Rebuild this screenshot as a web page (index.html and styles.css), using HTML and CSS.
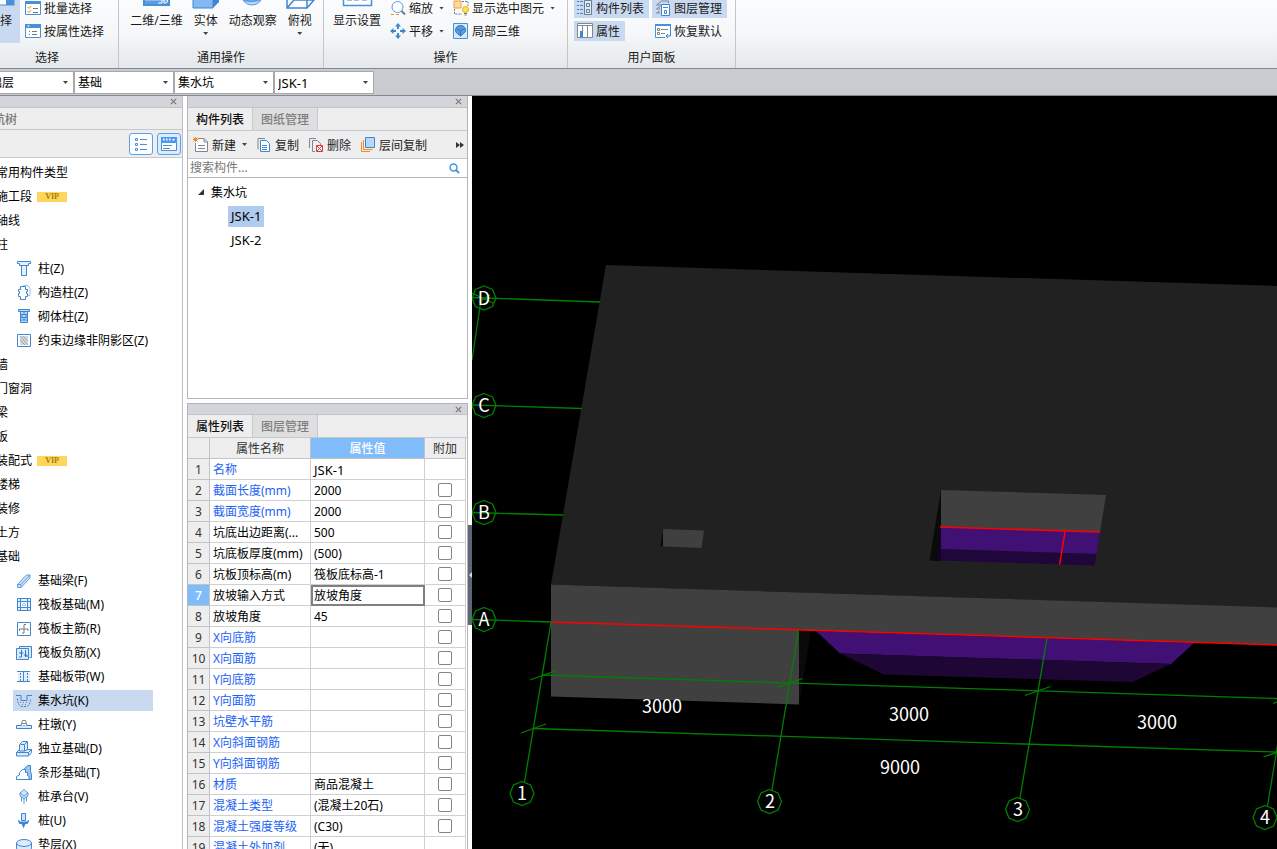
FILE: index.html
```html
<!DOCTYPE html>
<html lang="zh-CN">
<head>
<meta charset="utf-8">
<title>集水坑 JSK-1</title>
<link rel="stylesheet" href="styles.css">
</head>
<body>
<div class="app">
  <header class="ribbon">
    <section class="group">
      <div class="group-body">
        <button class="big on"><svg class="ico32" viewBox="0 0 32 32"><rect x="2" y="4" width="28" height="22" fill="#fff" stroke="#4a90d9"/><path d="M22 14l8 7v5h-8z" fill="#4a90d9"/></svg><span>选择</span></button>
        <div class="stack">
          <button class="small"><svg class="ico" viewBox="0 0 16 16"><path d="M.5 1.500h15v13H.5z" fill="#fff" stroke="#4a90d9"/><path d="M0 1h16v3H0z" fill="#4a90d9"/><path d="M2.500 7l1.500 1.500L6 6M2.500 11l1.500 1.500L6 10" fill="none" stroke="#f08a2c"/><path d="M8 8.500h5M8 12.500h5" stroke="#6b7c8d"/></svg><span>批量选择</span></button>
          <button class="small"><svg class="ico" viewBox="0 0 16 16"><path d="M.5 1.500h15v13H.5z" fill="#fff" stroke="#4a90d9"/><path d="M0 1h16v4H0z" fill="#4a90d9"/><path d="M2 2.500h3L3.500 4z" fill="#fff"/><path d="M4 8.500h1M7 8.500h5M4 11.500h1M7 11.500h5" stroke="#6b7c8d"/></svg><span>按属性选择</span></button>
        </div>
      </div>
      <h2>选择</h2>
    </section>
    <section class="group view-group">
      <div class="group-body">
        <button class="big"><svg class="ico32" viewBox="0 0 32 32"><path d="M3 4h27v23H3z" fill="#4a90d9"/><path d="M5 6h23v16H5z" fill="#8bbcf0"/><path d="M5 22h23v3H5z" fill="#5a9be2"/><path d="M18 20h4v4h-4M24 20v4h2l2-2-2-2z" fill="none" stroke="#fff"/></svg><span>二维/三维</span></button>
        <button class="big"><svg class="ico32" viewBox="0 0 32 32"><path d="M3 10h20v19H3z" fill="#84b8f2" stroke="#3f86d2"/><path d="M23 10l6-6v19l-6 6z" fill="#3f86d2"/></svg><span>实体</span><i class="caret"></i></button>
        <button class="big"><svg class="ico32" viewBox="0 0 32 32"><circle cx="15" cy="15" r="11" fill="#b9d7f7" stroke="#5a9be2"/><path d="M4 19c8 6 22 3 24-4" fill="none" stroke="#5a9be2" stroke-width="2"/></svg><span>动态观察</span></button>
        <button class="big"><svg class="ico32" viewBox="0 0 32 32"><path d="M3 11h20v18H3zM3 29l7-8h20M10 21V3h20v18l-7 8M23 11l7-8" fill="none" stroke="#3f86d2" stroke-width="1.500"/></svg><span>俯视</span><i class="caret"></i></button>
      </div>
      <h2>通用操作</h2>
    </section>
    <section class="group op-group">
      <div class="group-body">
        <button class="big"><svg class="ico32" viewBox="0 0 32 32"><path d="M2.500 4.500h28v22h-28z" fill="#fff" stroke="#4a90d9" stroke-width="1.500"/><path d="M6 20.500h5M13 20.500h5M21 20.500h5" stroke="#6b7c8d" stroke-width="2"/></svg><span>显示设置</span></button>
        <div class="stack">
          <button class="small"><svg class="ico" viewBox="0 0 16 16"><circle cx="7.500" cy="7" r="5.500" fill="#fff" stroke="#5a9be2"/><path d="M11.500 11l3.500 3.500" stroke="#6b7c8d" stroke-width="2"/><path d="M1 14.500h3M6 14.500h3" stroke="#f08a2c"/></svg><span>缩放</span><i class="caret"></i></button>
          <button class="small"><svg class="ico" viewBox="0 0 16 16"><g fill="#3f86d2"><path d="M8 0l3 3.500H5zM8 16l3-3.500H5zM0 8l3.500-3v6zM16 8l-3.500-3v6z"/><path d="M7 3h2v3H7zM7 10h2v3H7zM3 7h3v2H3zM10 7h3v2h-3z"/></g></svg><span>平移</span><i class="caret"></i></button>
        </div>
        <div class="stack">
          <button class="small"><svg class="ico" viewBox="0 0 16 16"><path d="M1 1h7v7H1z" fill="#ffd9a0" stroke="#f0a040"/><path d="M9 1.500h6V6M1.500 9v5H9" fill="none" stroke="#6b7c8d" stroke-dasharray="2 1"/><circle cx="12.500" cy="9.500" r="3" fill="#ffe14d" stroke="#e0b020"/><path d="M11 13.500h3M11.500 15h2" stroke="#6b7c8d"/></svg><span>显示选中图元</span><i class="caret"></i></button>
          <button class="small"><svg class="ico" viewBox="0 0 16 16"><path d="M.5.5h14v15H.5z" fill="#d8eafc" stroke="#4a90d9"/><path d="M7.500 2.500c3 0 5 2 5 4.500 0 3-2 3-2.500 4l-2.500 2-2.500-2C4 10 2.500 10 2.500 7c0-2.500 2-4.500 5-4.500z" fill="#5a9be2" stroke="#2f75c4"/><path d="M4 6l3.500 1.500L11 6M7.500 7.500V13" fill="none" stroke="#2f75c4"/></svg><span>局部三维</span></button>
        </div>
      </div>
      <h2>操作</h2>
    </section>
    <section class="group panel-group">
      <div class="group-body">
        <div class="stack">
          <button class="small on"><svg class="ico" viewBox="0 0 16 16"><path d="M0 1.500h2M3 1.500h3M0 5.500h2M3 5.500h3M0 9.500h2M3 9.500h3M0 13.500h2M3 13.500h3" stroke="#3f86d2"/><path d="M7.500.5h7v14h-7z" fill="#dcebfb" stroke="#6b7c8d"/><path d="M9.500 3.500h3v3h-3zM9.500 9.500h3v3h-3z" fill="none" stroke="#6b7c8d"/></svg><span>构件列表</span></button>
          <button class="small on"><svg class="ico" viewBox="0 0 16 16"><path d="M.5.5h15v14H.5z" fill="#fff" stroke="#7d8893"/><path d="M1 2.500h14M5.500 3v12M10.500 3v12" stroke="#7d8893"/><path d="M3 8h3v6H3z" fill="#3f86d2"/></svg><span>属性</span></button>
        </div>
        <div class="stack">
          <button class="small on"><svg class="ico" viewBox="0 0 16 16"><path d="M1.500 5l5-4h7v2M1.500 9l4-3M1.500 13l3-2M1.500 5H6M1.500 9H5M1.500 13H5" fill="none" stroke="#7d8893"/><path d="M6.500 4.500h8v11h-8z" fill="#fff" stroke="#3f86d2"/><path d="M8 7.500h5M9.500 10.500h2v3h-2z" fill="none" stroke="#3f86d2"/></svg><span>图层管理</span></button>
          <button class="small"><svg class="ico" viewBox="0 0 16 16"><path d="M10 14.500H.5V1.500h15V9" fill="#fff" stroke="#4a90d9"/><path d="M0 1h16v2H0z" fill="#4a90d9"/><path d="M2.500 5.500h2v2h-2zM2.500 9.500h2v2h-2zM6 6.500h7M6 10.500h4" fill="none" stroke="#7d8893"/><path d="M15.500 9v4H11M13 11l-2 2 2 2" fill="none" stroke="#3f86d2"/></svg><span>恢复默认</span></button>
        </div>
      </div>
      <h2>用户面板</h2>
    </section>
  </header>

  <div class="pickers">
    <label class="picker"><select aria-label="楼层"><option>基础层</option></select></label>
    <label class="picker"><select aria-label="类别"><option>基础</option></select></label>
    <label class="picker"><select aria-label="构件类型"><option>集水坑</option></select></label>
    <label class="picker"><select class="code" aria-label="构件"><option>JSK-1</option></select></label>
  </div>

  <main class="work">
    <nav class="navigator">
      <div class="strip"><button class="close" aria-label="关闭"><svg viewBox="0 0 8 8"><path d="M1 1l6 6M7 1L1 7"/></svg></button></div>
      <h3>导航树</h3>
      <div class="nav-tools">
        <button aria-label="列表"><svg class="ico" viewBox="0 0 16 16" fill="none" stroke="#4a90d9"><path d="M2.500 2.500h2v2h-2zM2.500 7.500h2v2h-2zM2.500 12.500h2v2h-2zM7 3.500h7M7 8.500h7M7 13.500h7"/></svg></button>
        <button class="on" aria-label="面板"><svg class="ico" viewBox="0 0 16 16"><path d="M.5 1.500h15v13H.5z" fill="#fff" stroke="#4a90d9"/><path d="M0 1h16v6H0z" fill="#4a9af0"/><path d="M2 3.500h1.500M5 3.500h1.500M8 3.500h1.500" stroke="#fff" stroke-width="2"/><path d="M11 3h3l-1.500 2z" fill="#fff"/><path d="M2 9.500h9M2 12.500h7" stroke="#4a90d9"/></svg></button>
      </div>
      <ul class="tree">
        <li class="cat">常用构件类型</li>
        <li class="cat">施工段<b class="vip">VIP</b></li>
        <li class="cat">轴线</li>
        <li class="cat">柱</li>
        <li class="leaf"><svg class="ico" viewBox="0 0 16 16" fill="#e4f0fd" stroke="#3f86d2"><path d="M1.500.5h13v2h-2v2h-9v-2h-2z"/><path d="M5.500 4.500h5v10h-5z"/></svg>柱(Z)</li>
        <li class="leaf"><svg class="ico" viewBox="0 0 16 16" fill="#fff" stroke="#3f86d2"><path d="M7 .5h5l2 3v7h-3" stroke="#9cc4ef"/><path d="M4.500 1.500h5v3h2v2h-1v2h1v3h-2v3h-5v-3h-2v-3h1v-2h-1v-2h2z"/></svg>构造柱(Z)</li>
        <li class="leaf"><svg class="ico" viewBox="0 0 16 16" fill="#b9d7f7" stroke="#3f86d2"><path d="M2.500.5h11v2h-11zM4.500 2.500h7v11h-7zM4.500 5.500h7M4.500 8.500h7M4.500 11h7M8 2.500v3M6 5.500v3M10 5.500v3M8 8.500V11"/></svg>砌体柱(Z)</li>
        <li class="leaf"><svg class="ico" viewBox="0 0 16 16"><path d="M1.500 1.500h13v12h-13z" fill="#fff" stroke="#3f86d2"/><path d="M4 3h8v9H4z" fill="#d5d9dd"/><path d="M4 3l8 9M4 7l5 5M7 3l5 5" stroke="#9aa3ac"/></svg>约束边缘非阴影区(Z)</li>
        <li class="cat">墙</li>
        <li class="cat">门窗洞</li>
        <li class="cat">梁</li>
        <li class="cat">板</li>
        <li class="cat">装配式<b class="vip">VIP</b></li>
        <li class="cat">楼梯</li>
        <li class="cat">装修</li>
        <li class="cat">土方</li>
        <li class="cat">基础</li>
        <li class="leaf"><svg class="ico" viewBox="0 0 16 16" fill="#cfe3f9" stroke="#5a9be2"><path d="M1.500 11.500l9-9.500h3.500v3L5 14.500H1.500z"/><path d="M1.500 11.500H5v3M5 11.500L14 2" fill="none"/></svg>基础梁(F)</li>
        <li class="leaf"><svg class="ico" viewBox="0 0 16 16" fill="#e4f0fd" stroke="#3f86d2"><path d="M1.500 1.500h13v12h-13z"/><path d="M4.500 4.500h7v6h-7z" fill="#fff"/><path d="M4.500 1.500v3M11.500 1.500v3M4.500 10.500v3M11.500 10.500v3M1.500 4.500h3M1.500 10.500h3M11.500 4.500h3M11.500 10.500h3" fill="none"/><path d="M6.500 6.500h3v2h-3z" fill="none" stroke="#9cc4ef"/></svg>筏板基础(M)</li>
        <li class="leaf"><svg class="ico" viewBox="0 0 16 16" fill="#fff" stroke="#3f86d2"><path d="M1.500 1.500h13v13h-13z"/><path d="M10 3.500H8v8.500H6M3.500 10V8H12v2" fill="none" stroke="#6b7c8d"/></svg>筏板主筋(R)</li>
        <li class="leaf"><svg class="ico" viewBox="0 0 16 16" fill="#dcebfb" stroke="#3f86d2"><path d="M3.500 3.500v-2h12v11h-2"/><path d="M.5 3.500h12v11H.5z"/><path d="M5.500 5v7H3M9.500 5v7M3 8h4.500M8 10h3v2" fill="none" stroke="#2f75c4"/></svg>筏板负筋(X)</li>
        <li class="leaf"><svg class="ico" viewBox="0 0 16 16"><path d="M2 2h12v11H2z" fill="#e4f0fd"/><path d="M1 2.500h13M1 12.500h13M7.500 2v11" stroke="#3f86d2"/><path d="M4.500 4v8M11.500 4v8" stroke="#3f86d2" stroke-dasharray="2 1"/></svg>基础板带(W)</li>
        <li class="leaf on"><svg class="ico" viewBox="0 0 16 16" fill="none" stroke="#3f86d2"><path d="M0 2.500h5v5h6v-5h5"/><path d="M1.500 5.500c0 5 2 8 4.500 8h4c2.500 0 4.500-3 4.500-8" stroke-dasharray="2 1"/><path d="M4 9.500h8M6 11.500h5" stroke="#7d8893" stroke-dasharray="1 2"/></svg>集水坑(K)</li>
        <li class="leaf"><svg class="ico" viewBox="0 0 16 16" fill="#dcebfb" stroke="#3f86d2"><path d="M.5 8.500h15v3H.5z"/><path d="M5 8.500l1.500-5h3l1.500 5M6 6.500h4" fill="#fff" stroke="#7d8893"/></svg>柱墩(Y)</li>
        <li class="leaf"><svg class="ico" viewBox="0 0 16 16" fill="#dcebfb" stroke="#3f86d2"><path d="M.5 11.500l3-3v-5l3-3h5v8h4v3l-3 3.500H.5z"/><path d="M3.500 8.500V10h5l3-1.500M8.500 10V3.500h-4M8.500 3.500l3-3M.5 11.500h12v3M12.500 11.500l3-3" fill="none"/></svg>独立基础(D)</li>
        <li class="leaf"><svg class="ico" viewBox="0 0 16 16" fill="#fff" stroke="#3f86d2"><path d="M7.500 5l4-4.500h3v6l1 3v5h-3z" fill="#9cc4ef"/><path d="M.5 14.500v-3l3-1.500V7.500l3-3h3v3h2v3l1.500 1v3z"/></svg>条形基础(T)</li>
        <li class="leaf"><svg class="ico" viewBox="0 0 16 16" fill="#cfe3f9" stroke="#5a9be2"><path d="M8 .5l4 3.500v3L8 9.500 4 7V4z"/><path d="M5.500 8v4.500M8 9v6M10.500 8v4.500M4 4l4 3 4-3" fill="none"/></svg>桩承台(V)</li>
        <li class="leaf"><svg class="ico" viewBox="0 0 16 16" fill="#cfe3f9" stroke="#3f86d2"><path d="M5.500.5h4v7h-4z"/><path d="M2.500 7.500l2 1.500h6l2-1.500-1 3H9l-1.500 4L6 10.500H3.500z" fill="#3f86d2"/></svg>桩(U)</li>
        <li class="leaf"><svg class="ico" viewBox="0 0 16 16" fill="#dcebfb" stroke="#3f86d2"><path d="M.5 6v5c0 5 15 5 15 0V6"/><ellipse cx="8" cy="6" rx="7.500" ry="3.500"/></svg>垫层(X)</li>
      </ul>
    </nav>

    <div class="panels">
      <section class="panel components">
        <div class="strip"><button class="close" aria-label="关闭"><svg viewBox="0 0 8 8"><path d="M1 1l6 6M7 1L1 7"/></svg></button></div>
        <div class="tabs"><button class="tab current">构件列表</button><button class="tab">图纸管理</button></div>
        <div class="tools">
          <button><svg class="ico" viewBox="0 0 16 16"><path d="M5 1.500h6l3.500 3.500v9.500h-12V6" fill="#fff" stroke="#7d8893"/><path d="M11 1.500V5h3.500M5 8.500h7M5 11.500h7" fill="none" stroke="#7d8893"/><path d="M2.500 0v5M0 2.500h5M.5.5l4 4M4.500.5l-4 4" stroke="#f08a2c"/></svg><span>新建</span><i class="caret"></i></button>
          <button><svg class="ico" viewBox="0 0 16 16"><path d="M2 12.500V1.500h7" fill="none" stroke="#7d8893"/><path d="M4.500 3.500h6l3 3v8h-9z" fill="#fff" stroke="#3f86d2"/><path d="M6 8.500h5M6 10.500h5M6 12.500h5" stroke="#3f86d2"/></svg><span>复制</span></button>
          <button><svg class="ico" viewBox="0 0 16 16"><path d="M1.500 11V1.500H8M4.500 14.500v-11h5l3 3V8M4.500 14.500H7" fill="none" stroke="#7d8893"/><path d="M8.500 8.500h6v6h-6z" fill="#fff" stroke="#d43c3c"/><path d="M9 9l5 5M14 9l-5 5" stroke="#d43c3c"/></svg><span>删除</span></button>
          <button><svg class="ico" viewBox="0 0 16 16"><path d="M1.500 5v9.500H10M3.500 3v9.500h9" fill="none" stroke="#f08a2c"/><path d="M5.500.5h9v10h-9z" fill="#b9d7f9" stroke="#3f86d2"/></svg><span>层间复制</span></button>
          <button class="more" aria-label="更多"><svg viewBox="0 0 8 6"><path d="M0 0l4 3-4 3zM4 0l4 3-4 3z" fill="#333"/></svg></button>
        </div>
        <label class="search"><input type="text" placeholder="搜索构件..." aria-label="搜索构件"><svg class="ico" viewBox="0 0 16 16" fill="none" stroke="#3d9bd8"><circle cx="7.500" cy="7.500" r="3.500" stroke-width="1.500"/><path d="M10 10l3 3" stroke-width="2"/></svg></label>
        <ul class="list">
          <li class="root"><svg viewBox="0 0 6 6"><path d="M6 0v6H0z" fill="#333"/></svg><span>集水坑</span></li>
          <li class="item"><span class="code on">JSK-1</span></li>
          <li class="item"><span class="code">JSK-2</span></li>
        </ul>
      </section>

      <section class="panel properties">
        <div class="strip"><button class="close" aria-label="关闭"><svg viewBox="0 0 8 8"><path d="M1 1l6 6M7 1L1 7"/></svg></button></div>
        <div class="tabs"><button class="tab current">属性列表</button><button class="tab">图层管理</button></div>
        <table>
          <colgroup><col class="c-num"><col class="c-name"><col class="c-value"><col class="c-extra"></colgroup>
          <thead><tr><th></th><th>属性名称</th><th class="on">属性值</th><th>附加</th></tr></thead>
          <tbody>
            <tr><th>1</th><td class="link">名称</td><td class="code">JSK-1</td><td></td></tr>
            <tr><th>2</th><td class="link">截面长度(mm)</td><td>2000</td><td><input type="checkbox" aria-label="附加 截面长度"></td></tr>
            <tr><th>3</th><td class="link">截面宽度(mm)</td><td>2000</td><td><input type="checkbox" aria-label="附加 截面宽度"></td></tr>
            <tr><th>4</th><td>坑底出边距离(...</td><td>500</td><td><input type="checkbox" aria-label="附加 坑底出边距离"></td></tr>
            <tr><th>5</th><td>坑底板厚度(mm)</td><td>(500)</td><td><input type="checkbox" aria-label="附加 坑底板厚度"></td></tr>
            <tr><th>6</th><td>坑板顶标高(m)</td><td>筏板底标高-1</td><td><input type="checkbox" aria-label="附加 坑板顶标高"></td></tr>
            <tr><th class="on">7</th><td>放坡输入方式</td><td class="editing">放坡角度</td><td><input type="checkbox" aria-label="附加 放坡输入方式"></td></tr>
            <tr><th>8</th><td>放坡角度</td><td>45</td><td><input type="checkbox" aria-label="附加 放坡角度"></td></tr>
            <tr><th>9</th><td class="link">X向底筋</td><td></td><td><input type="checkbox" aria-label="附加 X向底筋"></td></tr>
            <tr><th>10</th><td class="link">X向面筋</td><td></td><td><input type="checkbox" aria-label="附加 X向面筋"></td></tr>
            <tr><th>11</th><td class="link">Y向底筋</td><td></td><td><input type="checkbox" aria-label="附加 Y向底筋"></td></tr>
            <tr><th>12</th><td class="link">Y向面筋</td><td></td><td><input type="checkbox" aria-label="附加 Y向面筋"></td></tr>
            <tr><th>13</th><td class="link">坑壁水平筋</td><td></td><td><input type="checkbox" aria-label="附加 坑壁水平筋"></td></tr>
            <tr><th>14</th><td class="link">X向斜面钢筋</td><td></td><td><input type="checkbox" aria-label="附加 X向斜面钢筋"></td></tr>
            <tr><th>15</th><td class="link">Y向斜面钢筋</td><td></td><td><input type="checkbox" aria-label="附加 Y向斜面钢筋"></td></tr>
            <tr><th>16</th><td class="link">材质</td><td>商品混凝土</td><td><input type="checkbox" aria-label="附加 材质"></td></tr>
            <tr><th>17</th><td class="link">混凝土类型</td><td>(混凝土20石)</td><td><input type="checkbox" aria-label="附加 混凝土类型"></td></tr>
            <tr><th>18</th><td class="link">混凝土强度等级</td><td>(C30)</td><td><input type="checkbox" aria-label="附加 混凝土强度等级"></td></tr>
            <tr><th>19</th><td class="link">混凝土外加剂</td><td>(无)</td><td></td></tr>
          </tbody>
        </table>
      </section>
    </div>

    <div class="splitter"><button aria-label="收起面板"><svg viewBox="0 0 4 6"><path d="M4 0v6L1 3z" fill="#d5d9dd"/></svg></button></div>

    <svg class="scene" viewBox="472 96 805 753" preserveAspectRatio="xMinYMin slice">
      <path d="M606 265L1277 286V608L551 584.500z" fill="#212121"/>
      <path d="M551 584.500L1277 607.500V645L551 622z" fill="#404040"/>
      <path d="M551 622L799 630V704.500L551 696.500z" fill="#404040"/>
      <path d="M799 630L811 631 799 704z" fill="#0a0a0a"/>
      <path d="M816 631L1194 643 1171 664 840 653.500z" fill="#401075"/>
      <path d="M840 653.500L1171 664 1132.500 682 884 674.500z" fill="#1e0735"/>
      <path d="M663 529L660.500 546.500H663z" fill="#080808"/>
      <path d="M663 529L704 530.500 701.500 548 663 546.500z" fill="#404040"/>
      <path d="M941 490L929.500 560.500 941 561z" fill="#0a0a0a"/>
      <path d="M941 490L1106 495 1100 532 941 527z" fill="#404040"/>
      <path d="M941 527L1100 532 1096.500 554 941 549z" fill="#401075"/>
      <path d="M941 549L1096.500 554 1094.500 565.500 939 560.500z" fill="#1f073c"/>
      <path d="M936 560L941 532V561z" fill="#100420"/>
      <g fill="none" stroke="#008000" stroke-width="1.300">
        <path d="M472 297.500L600 302M472 405L582 408.500M472 512.500L563 515M472 619.500L551 622"/>
        <path d="M472 293L494 303.500M481 300L472 360M479 302L490 295"/>
        <path d="M551 622L524.500 782M798.500 630L772 790M1047 638L1020 798M1294 646L1267.500 806"/>
        <path d="M542 675L1277 698.500M533.500 728.500L1277 752"/>
        <path d="M530 680L555 671M778 687.500L802.500 678.500M1025 695.500L1050.500 686.500M1273 703.500L1298 694.500M521 733L546 724M1263.500 757L1289 748"/>
        <path d="M484 286l8.500 3.500 3.500 8.500-3.500 8.500-8.500 3.500-8.500-3.500-3.500-8.500 3.500-8.500zM484 393.500l8.500 3.500 3.500 8.500-3.500 8.500-8.500 3.500-8.500-3.500-3.500-8.500 3.500-8.500zM484 500.500l8.500 3.500 3.500 8.500-3.500 8.500-8.500 3.500-8.500-3.500-3.500-8.500 3.500-8.500zM484 607.500l8.500 3.500 3.500 8.500-3.500 8.500-8.500 3.500-8.500-3.500-3.500-8.500 3.500-8.500z"/>
        <path d="M522 781.500l8.500 3.500 3.500 8.500-3.500 8.500-8.500 3.500-8.500-3.500-3.500-8.500 3.500-8.500zM769.500 789.500l8.500 3.500 3.500 8.500-3.500 8.500-8.500 3.500-8.500-3.500-3.500-8.500 3.500-8.500zM1017.500 797.500l8.500 3.500 3.500 8.500-3.500 8.500-8.500 3.500-8.500-3.500-3.500-8.500 3.500-8.500zM1265 805.500l8.500 3.500 3.500 8.500-3.500 8.500-8.500 3.500-8.500-3.500-3.500-8.500 3.500-8.500z"/>
      </g>
      <path d="M551 622L1277 645M940 527L1100 532M1065 532L1059.500 565" fill="none" stroke="#f00" stroke-width="1.500"/>
      <g class="marks">
        <text x="484" y="305">D</text><text x="484" y="412">C</text><text x="484" y="519">B</text><text x="484" y="626">A</text>
        <text x="522" y="800">1</text><text x="770" y="808">2</text><text x="1018" y="816">3</text><text x="1265" y="824">4</text>
        <text x="662" y="713">3000</text><text x="909" y="721">3000</text><text x="1157" y="729">3000</text><text x="900" y="774">9000</text>
      </g>
    </svg>
  </main>
</div>
</body>
</html>
```
FILE: styles.css
```css
* { box-sizing: border-box; }

body {
  margin: 0;
  color: #000;
  font: 12px/18px "Noto Sans", "Noto Sans CJK SC", sans-serif;
}

button, input, select { font: inherit; color: inherit; }
button { padding: 0; border: 0; background: none; white-space: nowrap; }
h2, h3 { margin: 0; font-size: 12px; font-weight: 400; }
ul { margin: 0; padding: 0; list-style: none; }
svg { display: block; flex: none; }

.app { display: flex; flex-direction: column; height: 100vh; overflow: hidden; }
.ico { width: 16px; height: 16px; }
.ico32 { width: 32px; height: 32px; }
.code { font-size: 13px; }

.caret {
  width: 5px;
  height: 3px;
  background: #444;
  clip-path: polygon(0 0, 100% 0, 50% 100%);
}

/* Ribbon */
.ribbon {
  display: flex;
  flex: none;
  height: 69px;
  overflow: hidden;
  border-bottom: 1px solid #85888f;
  background: linear-gradient(#fbfcfd, #f5f7f8 50%, #e4e8eb);
  color: #1a1a1a;
}
.group {
  display: flex;
  flex-direction: column;
  justify-content: flex-end;
  padding: 0 6px;
  border-right: 1px solid #c3c5c8;
}
.group:first-child { width: 143px; margin-left: -24px; padding: 0 4px; }
.group h2 { height: 22px; line-height: 24px; text-align: center; }
.group-body { display: flex; flex: none; height: 67px; padding-bottom: 3px; }
.view-group { width: 205px; }
.view-group .group-body { justify-content: center; gap: 11px; }
.op-group { width: 244px; }
.op-group .group-body { padding-left: 3px; gap: 1px; }
.op-group .big { margin-right: 5px; }
.panel-group { width: 168px; }
.panel-group .group-body { gap: 3px; }
.big { display: flex; flex-direction: column; align-items: center; height: 64px; }
.big .ico32 { margin: 0 -4px; }
.big span { padding-top: 1px; }
.big.on { width: 40px; }
.big .caret { margin-top: 2px; }
.on { background: #c9d9f0; }
.stack { display: flex; flex-direction: column; justify-content: flex-end; align-items: flex-start; gap: 3px; padding-bottom: 2px; }
.small { display: flex; align-items: center; height: 20px; gap: 3px; padding: 0 5px 0 3px; }
.small span, .tools span { padding-top: 2px; }
.group:first-child .small { padding: 0 5px; }
.small .caret { margin-left: 3px; }

/* Pickers */
.pickers {
  display: flex;
  flex: none;
  height: 27px;
  padding: 2px 0 1px;
  border-bottom: 1px solid #85888f;
  background: #c9cbd0;
}
.picker { position: relative; width: 100px; height: 23px; }
.picker:first-child { margin-left: -26px; }
.picker::after {
  content: "";
  position: absolute;
  right: 6px;
  top: 10px;
  width: 5px;
  height: 3px;
  background: #444;
  clip-path: polygon(0 0, 100% 0, 50% 100%);
}
.picker select {
  appearance: none;
  width: 100%;
  height: 100%;
  padding: 0 3px;
  border: 1px solid #a6a8ab;
  border-radius: 0;
  background: #fff;
}

.work { display: flex; flex: 1; min-height: 0; }
.strip {
  display: flex;
  flex: none;
  justify-content: flex-end;
  align-items: center;
  height: 12px;
  padding-right: 5px;
  border-bottom: 1px solid #c2c3c9;
  background: #d4d5da;
}
.close svg { width: 7px; height: 7px; fill: none; stroke: #777; stroke-width: 1.3; }

/* Navigator */
.navigator { flex: none; width: 183px; overflow: hidden; border-right: 1px solid #bdbec6; background: #fff; }
.navigator h3 {
  height: 22px;
  line-height: 23px;
  text-indent: -19px;
  border-bottom: 1px solid #c6c8cc;
  background: #eee;
  color: #777;
  font-weight: 500;
}
.nav-tools {
  display: flex;
  justify-content: flex-end;
  align-items: center;
  gap: 4px;
  height: 28px;
  padding-right: 1px;
  border-bottom: 1px solid #c6c8cc;
  background: #eee;
}
.nav-tools button {
  display: grid;
  place-items: center;
  width: 24px;
  height: 22px;
  border: 1px solid #5ba0ea;
  border-radius: 3px;
  background: #fff;
}
.nav-tools .on { background: #dcecfd; }
.tree { display: flex; flex-direction: column; padding-top: 3px; }
.cat, .leaf { display: flex; flex: none; align-items: center; white-space: nowrap; }
.cat { height: 24px; margin-left: -4px; }
.leaf { width: 140px; height: 21px; margin: 1px 0 2px 13px; padding-left: 3px; gap: 6px; }
.vip {
  width: 30px;
  height: 10px;
  margin-left: 5px;
  background: #ffd65c;
  color: #a87a10;
  font: 700 8px/10px "Liberation Serif", serif;
  text-align: center;
}

/* Middle panels */
.panels { display: flex; flex: none; flex-direction: column; gap: 4px; width: 281px; margin-left: 4px; }
.panel { display: flex; flex-direction: column; min-height: 0; overflow: hidden; border: 1px solid #b4b5ba; background: #fff; }
.components { flex: 303 1 0; border-top: 0; }
.properties { flex: 446 1 0; border-bottom: 0; }
.properties .strip { height: 11px; }
.tabs { display: flex; flex: none; height: 23px; border-bottom: 1px solid #c6c8cc; background: #eee; }
.tab { padding: 2px 8px 0; background: #dfdfe0; color: #808080; border-right: 1px solid #c6c8cc; font-weight: 500; }
.tab.current { background: #eee; color: #111; }
.tools {
  display: flex;
  flex: none;
  align-items: center;
  gap: 9px;
  height: 28px;
  padding: 0 3px 0 5px;
  border-bottom: 1px solid #c6c8cc;
  background: #eee;
  color: #222;
}
.tools button { display: flex; align-items: center; gap: 3px; }
.tools .caret { margin-left: 3px; }
.tools .more { margin-left: auto; }
.more svg { width: 8px; height: 6px; }
.search { display: flex; flex: none; align-items: center; height: 19px; padding-right: 5px; border-bottom: 1px solid #b4b5ba; }
.search input { flex: 1; min-width: 0; height: 18px; padding: 0 2px; border: 0; outline: 0; background: none; }
.search input::placeholder { color: #777; }
.list { padding-top: 2px; }
.list li { display: flex; align-items: center; height: 24px; }
.root { gap: 7px; padding-left: 10px; }
.root svg { width: 6px; height: 6px; }
.root span { padding-top: 2px; }
.item { padding-left: 40px; }
.item span { padding: 0 3px; line-height: 21px; }
.item .on { background: #b1cbee; }

table { flex: none; width: 278px; table-layout: fixed; border-collapse: separate; border-spacing: 0; }
.c-num { width: 22px; }
.c-name { width: 101px; }
.c-value { width: 114px; }
.c-extra { width: 41px; }
th, td {
  height: 21px;
  padding: 2px 3px 0;
  border-right: 1px solid #d0d0d2;
  border-bottom: 1px solid #d0d0d2;
  overflow: hidden;
  white-space: nowrap;
  font-weight: 400;
  line-height: 18px;
}
th { padding: 2px 0 0; border-color: #c2c3c7; background: #eee; color: #333; text-align: center; }
th.on { background: #80bbfa; color: #fff; font-weight: 500; }
.link { color: #1a62f5; }
.editing { outline: 2px solid #808080; outline-offset: -2px; }
td:last-child { padding-top: 0; }
td input {
  appearance: none;
  display: block;
  width: 14px;
  height: 14px;
  margin: 0 auto;
  border: 1px solid #858585;
  border-radius: 2px;
  background: #fff;
}

.splitter { display: flex; flex: none; align-items: flex-start; width: 4px; padding-top: 429px; }
.splitter button { display: grid; place-items: center; width: 4px; height: 100px; background: #5d6773; }
.splitter svg { width: 4px; height: 6px; }

/* 3D scene */
.scene { flex: 1; min-width: 0; height: 100%; background: #000; }
.marks { fill: #fff; font: 18px "Noto Sans CJK SC", sans-serif; text-anchor: middle; }
```
